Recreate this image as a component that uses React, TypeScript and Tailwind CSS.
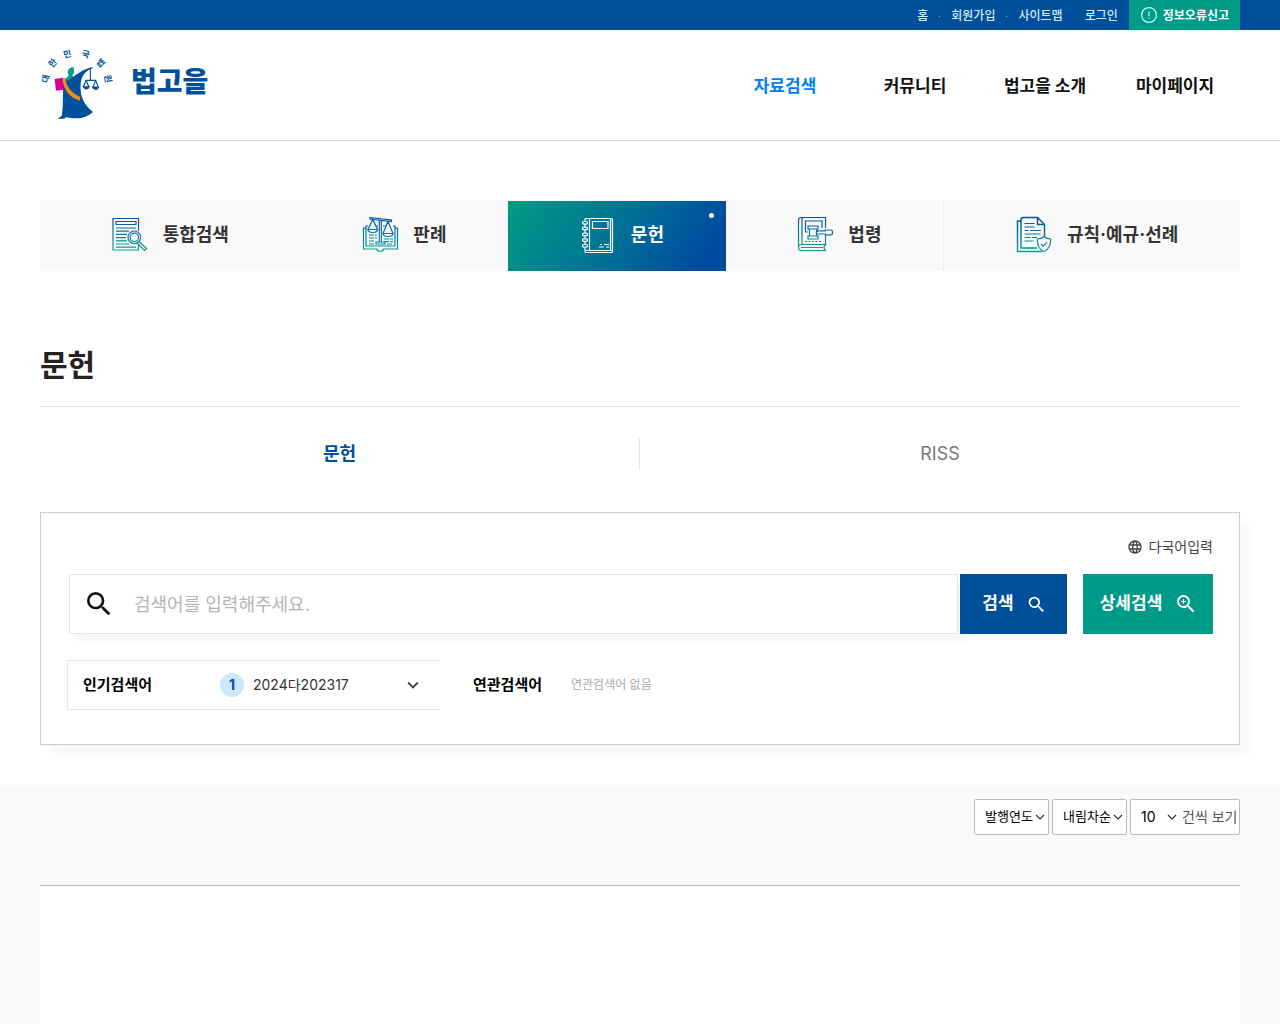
import type { ReactNode } from "react";
import { MdKeyboardArrowDown, MdLanguage, MdSearch, MdZoomIn } from "react-icons/md";
import { clsx } from "clsx";

type Tab = {
  label: string;
  icon: ReactNode;
  active?: boolean;
  divider?: boolean;
};

const utilLinks = [
  { label: "홈", dot: true },
  { label: "회원가입", dot: true },
  { label: "사이트맵", dot: false },
  { label: "로그인", dot: false },
];

const mainMenu = [
  { label: "자료검색", active: true },
  { label: "커뮤니티" },
  { label: "법고을 소개" },
  { label: "마이페이지" },
];

function TabIcon({ children, white }: { children: ReactNode; white?: boolean }) {
  return (
    <svg
      viewBox="0 0 37 40"
      className="h-10 w-[37px] shrink-0"
      fill="none"
      stroke={white ? "#fff" : "url(#tab-gradient)"}
      strokeWidth="1.2"
      aria-hidden="true"
    >
      <defs>
        <linearGradient id="tab-gradient" gradientUnits="userSpaceOnUse" x1="18" y1="2" x2="16" y2="36">
          <stop offset="0" stopColor="#0950a8" />
          <stop offset="1" stopColor="#08a596" />
        </linearGradient>
      </defs>
      {children}
    </svg>
  );
}

const tabs: Tab[] = [
  {
    label: "통합검색",
    icon: (
      <TabIcon>
        <path d="M26.5 15V2.500H1v31.500h25.500v-6" />
        <path d="M4 5.500h20v3H4zM4 12h20M4 15.200h13M4 18.400h11M4 21.600h10M4 24.800h11M4 28h13M4 31.200h20" />
        <circle cx="22.300" cy="21.300" r="6.300" />
        <circle cx="22.300" cy="21.300" r="4.200" />
        <path d="m27 25.500 7.500 7-2 2-7.500-7.500" />
      </TabIcon>
    ),
  },
  {
    label: "판례",
    icon: (
      <TabIcon>
        <path d="M6 10H4v2H1.500v21H15c0 3 6.500 3 6.500 0h14V12H33v-2h-2M4 12v18h29V12M14 10h2M21 10h3" />
        <path d="M8 1.500 29.500 4v1.500L8 3zM17.300 4v22h2V4M14 26h9v2h-9z" />
        <path d="M10.700 3.500 6 13.500h9.500zM6 13.500c0 4 9.500 4 9.500 0M26 5.500l-5 12h10zM21 17.500c0 4 10 4 10 0" />
        <path d="M7 19h8M7 22h8M7 25h5M7 28h5M22 23h9M22 25.500h9M25 28h6" strokeDasharray="5 1" />
      </TabIcon>
    ),
  },
  {
    label: "문헌",
    active: true,
    icon: (
      <TabIcon white>
        <path d="M5 5V3.500Q5 2.500 6 2.500h25.500q1 0 1 1v32q0 1-1 1H6q-1 0-1-1V32M9.500 2.500v32M6 34.500h26.500M30.500 2.500v32" />
        <path d="M12.500 5.500H28v7H12.500zM20 28.500h2M24 28.500h5M19 31h5M26 31h3" />
        <path d="M5 8v3M5 13.500v3M5 19v3M5 25v3" />
        {[6.7, 12.3, 18.3, 24, 29.7].map((y) => (
          <rect key={y} x="2.500" y={y - 1.200} width="5" height="2.600" rx="1.300" />
        ))}
      </TabIcon>
    ),
  },
  {
    label: "법령",
    divider: true,
    icon: (
      <TabIcon>
        <path d="M28.500 12V1.500H4.500q-3 0-3 3v27q0 3 3 3h24c-2-2-2-4 0-6H4.500q-3 0-3 3M28.500 19v9.500M5 1.500v27M4 31.500h22" />
        <path d="M11 16H8.500V5H25v7M20.500 16v-1" />
        <path d="M11 10h10v3H11zM11 20h10v3H11zM12.500 13v7M19.500 13v7M19.500 14.800h9V14H34q1.500 0 1.500 2.400T34 18.800h-5.500V18h-9" />
        <path d="M8 25.500h17" strokeDasharray="2 1.500" />
      </TabIcon>
    ),
  },
  {
    label: "규칙·예규·선례",
    icon: (
      <TabIcon>
        <path d="M5 5H1.500v30.500H26M28.500 20V8.500l-7-7H7.500q-2.500 0-2.500 2.500v28h16M21.500 1.500v7h7" strokeWidth="1.500" />
        <path d="M8.500 7.500h10M8.500 11h10M8.500 14.500h4M14 14.500h11M8.500 18h16M8.500 21.500h6M16 21.500h5M8.500 25h9M11 32.500h2M15 32.500h2" />
        <path d="M28 20.500c2 2 4 2.500 6.700 2.500 0 6-1.700 10.500-6.700 12.800-5-2.300-6.700-6.800-6.700-12.800 2.700 0 4.700-.5 6.700-2.500z" />
        <path d="m25 28 2.200 2.200 4-4" />
      </TabIcon>
    ),
  },
];

// court emblem: figure with scales under an arc of lettering
function Emblem() {
  const arc = [
    { ch: "대", x: 77, y: 148, r: -78 },
    { ch: "한", x: 98, y: 101, r: -45 },
    { ch: "민", x: 142, y: 75, r: -12 },
    { ch: "국", x: 197, y: 75, r: 14 },
    { ch: "법", x: 242, y: 101, r: 46 },
    { ch: "원", x: 264, y: 148, r: 80 },
  ];
  return (
    <svg viewBox="60 50 225 225" className="size-[75px] shrink-0 overflow-visible" role="img" aria-label="대한민국법원">
      {arc.map((a) => (
        <text
          key={a.ch}
          x={a.x}
          y={a.y + 9}
          transform={`rotate(${a.r} ${a.x} ${a.y})`}
          textAnchor="middle"
          fontSize="26"
          fontWeight="600"
          fill="#00509b"
        >
          {a.ch}
        </text>
      ))}
      <path
        d="M129 148c14 0 24-1 33-7 16-11 31-23 56-27v3c-18 6-28 17-33 31-5 14-4 38 1 56 6 18 17 32 33 44-14 12-30 19-50 19-14 0-22-2-33-4 2 3 0 5-5 5h-18c5-4 12-6 13-12 4-32 3-69 3-108z"
        fill="#00509b"
      />
      <path d="M147 118q8-5 14-4l1 13c0 4-2 8-5 10l3 5-16 12-10-2 13-15c-5-4-5-12 0-19z" fill="#079a8a" />
      <path d="M104 149l25-4 3 36-24 3q-2-17-4-35z" fill="#d4008c" />
      <path d="M127 150l9-2c5 28 21 43 45 55l-2 11c-31-10-47-30-52-64z" fill="#ef8a1c" />
      <g fill="none" stroke="#00509b" strokeWidth="3.500">
        <path d="M211 116v37M196 153h33M198 153l-8 20M198 153l9 20M227 153l-8 21M227 153l8 21" />
        <path d="M188 171h21q-2 9-10 9t-11-9zM216 172h21q-2 9-10 9t-11-9z" fill="#00509b" strokeWidth="1" />
      </g>
    </svg>
  );
}

function TopBar() {
  return (
    <div className="h-[30px] bg-[#004f9a] px-10">
      <div className="flex h-full items-center justify-end text-xs font-medium text-[#d5eaff]">
        {utilLinks.map((link) => (
          <a key={link.label} href="#" className="flex items-center pt-0.5">
            {link.label}
            {link.dot ? (
              <span className="mx-[11px] size-px bg-[#8eb9e2]" />
            ) : (
              <span className={link.label === "사이트맵" ? "w-[22px]" : "w-[11px]"} />
            )}
          </a>
        ))}
        <a href="#" className="flex h-full items-center gap-1.5 bg-[#009b88] pr-[11px] pl-3 font-bold text-white">
          <svg viewBox="0 0 16 16" className="size-4" fill="none" stroke="#c8fff5" strokeWidth="1.200" aria-hidden="true">
            <circle cx="8" cy="8" r="7.400" />
            <path d="M8 4.500v4.500M8 10.500v1.300" />
          </svg>
          <span className="pt-0.5">정보오류신고</span>
        </a>
      </div>
    </div>
  );
}

function Header() {
  return (
    <header className="flex h-[111px] items-center justify-between border-b border-[#dcdcdc] px-10">
      <a href="#" className="flex items-center gap-4 pb-1">
        <Emblem />
        <span className="pb-0.5 text-[28px] leading-10 font-black text-[#00509b]">법고을</span>
      </a>
      <nav className="grid grid-cols-4 pt-0.5">
        {mainMenu.map((item) => (
          <a
            key={item.label}
            href="#"
            className={clsx(
              "w-[130px] text-center text-[17px] leading-6 font-bold whitespace-nowrap",
              item.active ? "text-[#0080f0]" : "text-[#111]"
            )}
          >
            {item.label}
          </a>
        ))}
      </nav>
    </header>
  );
}

function CategoryTabs() {
  return (
    <nav className="flex h-[71px] bg-[#f9f9f9]">
      {tabs.map((tab) => (
        <a
          key={tab.label}
          href="#"
          className={clsx(
            "relative flex flex-auto items-center justify-center gap-3.5 pl-2.5 text-lg font-bold whitespace-nowrap",
            tab.active ? "mt-px bg-linear-120 from-[#009b82] to-[#004aa0] to-90% text-white" : "text-[#333]",
            tab.divider && "border-r border-[#efefef]"
          )}
        >
          {tab.icon}
          <span className="pb-0.5">{tab.label}</span>
          {tab.active && <span className="absolute top-3 right-3 size-[5px] rounded-full bg-white" />}
        </a>
      ))}
    </nav>
  );
}

function SearchPanel() {
  return (
    <section className="mt-[42px] border border-[#ccc] bg-white px-[26px] pt-5 pb-[34px] shadow-[10px_10px_10px_rgba(0,0,0,0.03)]">
      <div className="flex justify-end">
        <button type="button" className="flex h-7 items-center gap-1.5 text-sm text-[#444]">
          <MdLanguage className="size-4" />
          다국어입력
        </button>
      </div>
      <form className="mt-[13px] flex h-[60px] pl-0.5" onSubmit={(e) => e.preventDefault()}>
        <label className="flex flex-1 items-center border border-[#e5e5e5] bg-white pl-[13px] shadow-[8px_8px_8px_rgba(0,0,0,0.03)]">
          <MdSearch className="size-8 text-[#111]" aria-hidden="true" />
          <input
            type="text"
            aria-label="검색어"
            placeholder="검색어를 입력해주세요."
            className="ml-[19px] h-full flex-1 text-lg outline-none placeholder:text-[#b5b5b5]"
          />
        </label>
        <button
          type="submit"
          className="relative ml-0.5 flex w-[107px] items-center justify-center gap-3 bg-[#004f9a] pl-0.5 text-[17px] font-bold text-white"
        >
          검색
          <MdSearch className="size-[21px]" />
        </button>
        <button
          type="button"
          className="ml-4 flex w-[130px] items-center justify-center gap-3 bg-[#009b88] pl-0.5 text-[17px] font-bold text-white"
        >
          상세검색
          <MdZoomIn className="size-6" />
        </button>
      </form>
      <div className="mt-[26px] flex items-center">
        <div className="flex h-[50px] w-[373px] items-center border border-r-0 border-[#e5e5e5] pr-4 pl-[15px]">
          <h3 className="w-[137px] text-[15px] font-bold text-black">인기검색어</h3>
          <span className="flex size-6 items-center justify-center rounded-full bg-[#cde7fb] text-sm font-bold text-[#00509b]">
            1
          </span>
          <a href="#" className="ml-[9px] flex-1 text-sm text-[#333]">
            2024다202317
          </a>
          <button type="button" aria-label="인기검색어 펼치기">
            <MdKeyboardArrowDown className="size-[22px] text-[#444]" />
          </button>
        </div>
        <h3 className="ml-[33px] text-[15px] font-bold text-black">연관검색어</h3>
        <span className="ml-[29px] text-xs text-[#aaa]">연관검색어 없음</span>
      </div>
    </section>
  );
}

type SortSelectProps = {
  label: string;
  value: string;
  suffix?: string;
};

function SortSelect({ label, value, suffix }: SortSelectProps) {
  return (
    <div
      className={clsx(
        "flex h-9 items-center rounded-xs border border-[#bbb] bg-white",
        suffix ? "w-[110px]" : "w-[75px]"
      )}
    >
      <div className={clsx("grid h-full items-center", suffix ? "w-[49px]" : "w-full")}>
        <select
          aria-label={label}
          className={clsx(
            "col-start-1 row-start-1 h-full w-full appearance-none pl-2.5 text-black outline-none",
            suffix ? "text-sm" : "text-[13px]"
          )}
        >
          <option>{value}</option>
        </select>
        <svg
          viewBox="0 0 10 6"
          className="pointer-events-none col-start-1 row-start-1 mr-[3px] h-1.5 w-2.5 justify-self-end"
          fill="none"
          stroke="#333"
          strokeWidth="1.200"
          aria-hidden="true"
        >
          <path d="m1 1 4 4 4-4" />
        </svg>
      </div>
      {suffix && <span className="ml-0.5 text-sm whitespace-nowrap text-[#555]">{suffix}</span>}
    </div>
  );
}

export default function App() {
  return (
    <div className="flex min-h-screen flex-col bg-white font-['Inter','Noto_Sans_CJK_KR',sans-serif] text-[#222]">
      <TopBar />
      <Header />
      <main className="flex flex-1 flex-col">
        <div className="px-10 pt-[59px] pb-10">
          <CategoryTabs />
          <h1 className="mt-[70px] border-b border-[#e5e5e5] pb-4 text-3xl leading-[49px] font-bold">문헌</h1>
          <div className="mt-[31px] grid grid-cols-2 divide-x divide-[#e5e5e5] text-center text-lg leading-8">
            <a href="#" className="font-bold text-[#004f9a]">
              문헌
            </a>
            <a href="#" className="text-[#777]">
              RISS
            </a>
          </div>
          <SearchPanel />
        </div>
        <div className="flex flex-1 flex-col bg-[#f9f9f9] px-10 pt-3.5">
          <div className="flex justify-end gap-[3px]">
            <SortSelect label="정렬 기준" value="발행연도" />
            <SortSelect label="정렬 순서" value="내림차순" />
            <SortSelect label="페이지당 건수" value="10" suffix="건씩 보기" />
          </div>
          <div className="mt-[50px] flex-1 border-t border-[#bbb] bg-white" />
        </div>
      </main>
    </div>
  );
}
